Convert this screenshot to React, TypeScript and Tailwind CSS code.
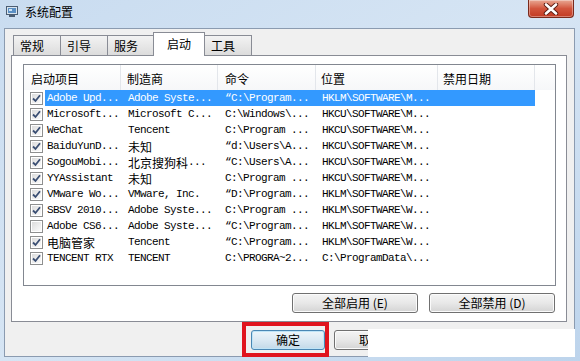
import React from "react";

type Row = { checked: boolean; c1: string; c2: string; c3: string; c4: string };

const rows: Row[] = [
  { checked: true, c1: "Adobe Upd...", c2: "Adobe Syste...", c3: "\u201cC:\\Program...", c4: "HKLM\\SOFTWARE\\M..." },
  { checked: true, c1: "Microsoft...", c2: "Microsoft C...", c3: "C:\\Windows\\...", c4: "HKCU\\SOFTWARE\\M..." },
  { checked: true, c1: "WeChat", c2: "Tencent", c3: "C:\\Program ...", c4: "HKCU\\SOFTWARE\\M..." },
  { checked: true, c1: "BaiduYunD...", c2: "未知", c3: "\u201cd:\\Users\\A...", c4: "HKCU\\SOFTWARE\\M..." },
  { checked: true, c1: "SogouMobi...", c2: "北京搜狗科...", c3: "\u201cC:\\Users\\A...", c4: "HKCU\\SOFTWARE\\M..." },
  { checked: true, c1: "YYAssistant", c2: "未知", c3: "C:\\Program ...", c4: "HKCU\\SOFTWARE\\M..." },
  { checked: true, c1: "VMware Wo...", c2: "VMware, Inc.", c3: "\u201cD:\\Program...", c4: "HKLM\\SOFTWARE\\W..." },
  { checked: true, c1: "SBSV 2010...", c2: "Adobe Syste...", c3: "C:\\Program ...", c4: "HKLM\\SOFTWARE\\W..." },
  { checked: false, c1: "Adobe CS6...", c2: "Adobe Syste...", c3: "\u201cC:\\Program...", c4: "HKLM\\SOFTWARE\\W..." },
  { checked: true, c1: "电脑管家", c2: "Tencent", c3: "\u201cC:\\Program...", c4: "HKLM\\SOFTWARE\\W..." },
  { checked: true, c1: "TENCENT RTX", c2: "TENCENT", c3: "C:\\PROGRA~2...", c4: "C:\\ProgramData\\..." },
];

function MixedText({ text }: { text: string }) {
  const parts = text.match(/[\u4e00-\u9fff]+|[^\u4e00-\u9fff]+/g) || [];
  return (
    <>
      {parts.map((p, i) =>
        /[\u4e00-\u9fff]/.test(p) ? (
          <span key={i} className="font-['Noto_Sans_CJK_SC',sans-serif] text-[12px] leading-[15px] tracking-normal whitespace-pre">
            {p}
          </span>
        ) : (
          <span key={i} className="font-['Liberation_Mono','DejaVu_Sans_Mono',monospace] text-[11px] leading-[15px] tracking-[-0.6px] whitespace-pre">
            {p}
          </span>
        )
      )}
    </>
  );
}

function CheckBox({ checked }: { checked: boolean }) {
  return (
    <div className="w-[13px] h-[13px] border border-[#8e8f8f] bg-white p-[1px]">
      <div className="w-full h-full bg-gradient-to-br from-[#dcdcdc] to-[#fbfbfb] flex items-center justify-center">
        {checked && (
          <svg width="9" height="9" viewBox="0 0 9 9">
            <path d="M1 4.5 L3.5 7 L8 1.2" fill="none" stroke="#3b4f73" strokeWidth="1.8" />
          </svg>
        )}
      </div>
    </div>
  );
}

function Tab({ label, selected }: { label: string; selected?: boolean }) {
  if (selected) {
    return (
      <div className="relative z-10 h-[24px] w-[52px] -mb-[1px] -mx-[1px] border border-b-0 border-[#898c95] bg-white flex items-start justify-center pt-[2px] text-[12px] text-black">
        {label}
      </div>
    );
  }
  return (
    <div className="h-[20px] w-[48px] border border-b-0 border-[#898c95] bg-gradient-to-b from-[#f3f3f3] to-[#dcdcdc] flex items-center justify-start pl-[6px] text-[12px] text-black mr-[-1px]">
      {label}
    </div>
  );
}

function Btn({ label, w, primary }: { label: string; w: string; primary?: boolean }) {
  return (
    <div
      className={
        primary
          ? `${w} h-[20px] rounded-[3px] border border-[#4a87b4] bg-gradient-to-b from-[#edf5fa] via-[#dbe9f3] to-[#c3d9e8] flex items-center justify-center text-[12px] text-black shadow-[inset_0_0_0_1px_#bfe4f7]`
          : `${w} h-[20px] rounded-[3px] border border-[#707070] bg-gradient-to-b from-[#f4f4f4] via-[#e8e8e8] to-[#d4d4d4] flex items-center justify-center text-[12px] text-black shadow-[inset_0_0_0_1px_#fbfbfb]`
      }
    >
      {label}
    </div>
  );
}

export default function App() {
  return (
    <div className="relative w-[580px] h-[361px] overflow-hidden bg-gradient-to-br from-[#c9dcf0] via-[#d6e5f4] to-[#bdd4ec] font-['Noto_Sans_CJK_SC',sans-serif] flex flex-col">
      {/* title bar */}
      <div className="h-[28px] flex items-start shrink-0">
        <div className="ml-[6px] mt-[6px]">
          <svg width="12" height="11" viewBox="0 0 12 11">
            <rect x="0.5" y="0.5" width="11" height="8" fill="#d8e4ee" stroke="#4b5d73" />
            <rect x="2" y="2" width="8" height="5" fill="#5a8fc4" />
            <rect x="3" y="3" width="3" height="2" fill="#cfe4f7" />
            <rect x="3" y="9" width="6" height="2" fill="#4b5d73" />
          </svg>
        </div>
        <div className="ml-[7px] mt-[4px] text-[12px] leading-[16px] text-black">系统配置</div>
        <div className="ml-auto mr-[6px] w-[46px] h-[18px] rounded-b-[4px] border border-t-0 border-[#7a2a1c] bg-gradient-to-b from-[#e8a793] via-[#d2553d] to-[#c23a22] flex items-center justify-center shadow-[inset_0_0_0_1px_rgba(255,255,255,0.35)]">
          <svg width="16" height="12" viewBox="0 0 16 12">
            <path d="M3 1.5 L13 10.5 M13 1.5 L3 10.5" stroke="#5a1a10" strokeWidth="4.4" strokeLinecap="round" />
            <path d="M3 1.5 L13 10.5 M13 1.5 L3 10.5" stroke="#ffffff" strokeWidth="2.6" strokeLinecap="round" />
          </svg>
        </div>
      </div>

      {/* body */}
      <div className="flex flex-1">
        <div className="w-[4px]" />
        <div className="w-[571px] h-[329px] border border-[#8b9bb0] bg-[#f0f0f0] flex flex-col">
          {/* tabs */}
          <div className="flex items-end pl-[8px] pt-[3px] h-[26px]">
            <Tab label="常规" />
            <Tab label="引导" />
            <Tab label="服务" />
            <Tab label="启动" selected />
            <Tab label="工具" />
          </div>
          {/* panel */}
          <div className="ml-[6px] w-[556px] h-[267px] border border-[#898c95] bg-white flex flex-col pl-[11px] pr-[11px] pt-[8px]">
            {/* list view */}
            <div className="w-[533px] h-[222px] border border-[#828790] bg-white flex flex-col overflow-hidden">
              <div className="h-[25px] flex bg-gradient-to-b from-[#ffffff] to-[#f6f7f9] text-[12px] text-black items-stretch shrink-0">
                <div className="w-[97px] border-r border-[#e3e6eb] pl-[7px] flex items-center pt-[2px]">启动项目</div>
                <div className="w-[97px] border-r border-[#e3e6eb] pl-[6px] flex items-center pt-[2px]">制造商</div>
                <div className="w-[98px] border-r border-[#e3e6eb] pl-[7px] flex items-center pt-[2px]">命令</div>
                <div className="w-[122px] border-r border-[#e3e6eb] pl-[5px] flex items-center pt-[2px]">位置</div>
                <div className="w-[97px] border-r border-[#e3e6eb] pl-[5px] flex items-center pt-[2px]">禁用日期</div>
                <div className="flex-1" />
              </div>
              {rows.map((r, i) => (
                <div key={i} className="h-[16px] flex items-center shrink-0">
                  <div className="w-[21px] pl-[6px] flex items-center">
                    <CheckBox checked={r.checked} />
                  </div>
                  <div
                    className={
                      i === 0
                        ? "w-[490px] h-[16px] flex items-center bg-[#3399ff] text-white"
                        : "w-[490px] h-[16px] flex items-center text-black"
                    }
                  >
                    <div className="w-[76px] pl-[2px] flex items-center">
                      <MixedText text={r.c1} />
                    </div>
                    <div className="w-[97px] pl-[7px] flex items-center">
                      <MixedText text={r.c2} />
                    </div>
                    <div className="w-[98px] pl-[7px] flex items-center">
                      <MixedText text={r.c3} />
                    </div>
                    <div className="w-[122px] pl-[6px] flex items-center">
                      <MixedText text={r.c4} />
                    </div>
                  </div>
                </div>
              ))}
            </div>
            {/* buttons */}
            <div className="flex justify-end gap-[11px] mt-[7px]">
              <Btn label="全部启用 (E)" w="w-[126px]" />
              <Btn label="全部禁用 (D)" w="w-[126px]" />
            </div>
          </div>
          {/* bottom buttons */}
          <div className="flex ml-[246px] mt-[8px] gap-[9px]">
            <Btn label="确定" w="w-[74px]" primary />
            <Btn label="取消" w="w-[74px]" />
          </div>
        </div>
        <div className="flex-1" />
      </div>
      <div className="h-[4px] shrink-0" />

      {/* annotation overlay */}
      <div className="absolute left-[242px] top-[322px] w-[87px] h-[35px] border-[4px] border-[#e0141e]" />
      <div className="absolute left-[368px] top-[329px] w-[207px] h-[28px] bg-white" />
    </div>
  );
}
